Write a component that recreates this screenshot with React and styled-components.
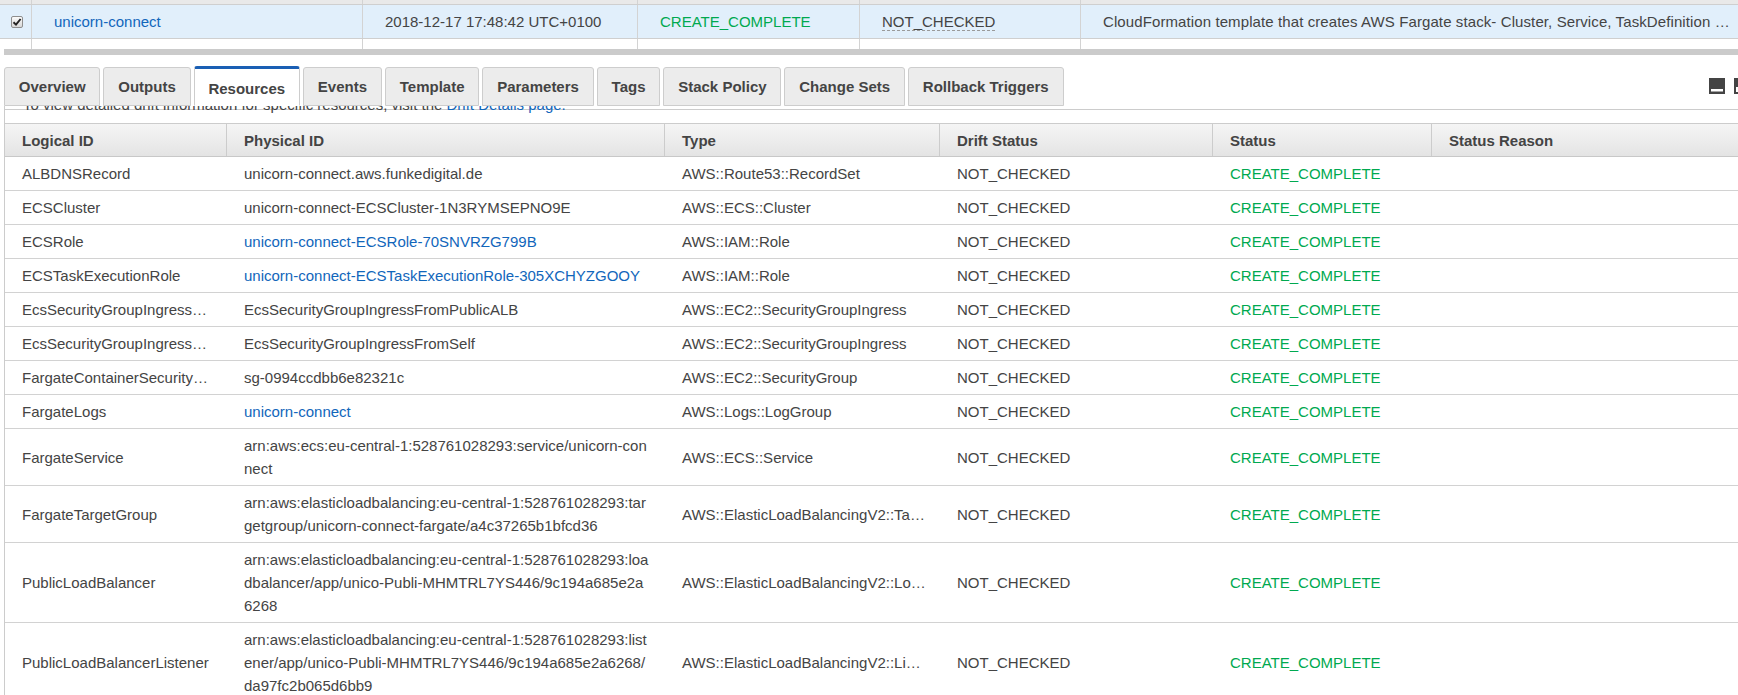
import React from "react";
import styled, { createGlobalStyle, css } from "styled-components";

const GlobalStyle = createGlobalStyle`
  html, body {
    margin: 0;
    padding: 0;
    overflow: hidden;
    background: #fff;
  }
  body {
    font-family: "Liberation Sans", Arial, sans-serif;
    font-size: 15px;
    color: #444;
  }
`;

const Page = styled.div`
  width: 1760px;
`;

/* stack list (top, scrolled) */

const StackList = styled.div`
  height: 49px;
  overflow: hidden;
`;

const StackScroll = styled.div`
  margin-top: -29px;
`;

const StackRow = styled.div`
  display: grid;
  grid-template-columns: 32px 331px 275px 222px 221px 1fr;
  height: 34px;
  box-sizing: border-box;
  border-bottom: 1px solid #cfcfcf;
  background: ${(p) => (p.$head ? "#e9e9e9" : p.$selected ? "#e1effb" : "#fff")};
  ${(p) => p.$head && css`font-weight: bold;`}
`;

const StackCell = styled.div`
  display: flex;
  align-items: center;
  padding: 0 10px 0 22px;
  border-right: 1px solid #d3d3d3;
  white-space: nowrap;
  overflow: hidden;
  ${(p) =>
    p.$center &&
    css`
      justify-content: center;
      padding: 0 0 0 2px;
    `}
  ${(p) =>
    p.$desc &&
    css`
      letter-spacing: 0.1px;
    `}
`;

const CheckBox = styled.span`
  width: 12px;
  height: 12px;
  box-sizing: border-box;
  border: 1px solid #8e8e8e;
  border-radius: 2px;
  background: linear-gradient(#fbfbfb, #d8d8d8);
  display: flex;
  align-items: center;
  justify-content: center;
`;

const Link = styled.span`
  color: #1166bb;
`;

const Status = styled.span`
  color: #00a94f;
`;

const Dotted = styled.span`
  border-bottom: 1px dashed #9a9a9a;
  line-height: 17px;
`;

const Splitter = styled.div`
  height: 6px;
  margin-left: 4px;
  background: #cbcbcb;
`;

/* tabs */

const TabBar = styled.div`
  display: flex;
  align-items: flex-end;
  gap: 3px;
  height: 40px;
  margin-top: 11px;
  padding: 0 10px 0 4px;
`;

const Tab = styled.div`
  height: 39px;
  box-sizing: border-box;
  padding: 0 13.85px;
  display: flex;
  align-items: center;
  border: 1px solid #cdcdcd;
  border-radius: 3px 3px 0 0;
  background: #ececec;
  font-weight: bold;
  color: #444;
  white-space: nowrap;
  ${(p) =>
    p.$active &&
    css`
      height: 40px;
      padding-top: 3px;
      background: #fff;
      border-top: 3px solid #1a5fb4;
      border-bottom-color: #fff;
    `}
`;

const PanelTools = styled.div`
  margin-left: auto;
  align-self: center;
  display: flex;
  gap: 9px;
`;

/* resources panel */

const Panel = styled.div`
  margin-left: 4px;
  border-left: 1px solid #cccccc;
  overflow: hidden;
  height: 600px;
  background: linear-gradient(#cccccc, #cccccc) 0 3px / 100% 1px no-repeat;
`;

const Intro = styled.p`
  margin: -13px 0 7px;
  padding-left: 18px;
  line-height: 23px;
  white-space: nowrap;
`;

const ResRow = styled.div`
  display: grid;
  grid-template-columns: 222px 438px 275px 273px 219px 1fr;
  align-items: center;
  border-bottom: 1px solid #d2d2d2;
  ${(p) =>
    p.$head &&
    css`
      align-items: stretch;
      border-top: 1px solid #cccccc;
      border-bottom-color: #c8c8c8;
      background: linear-gradient(#f5f5f5, #e4e4e4);
      font-weight: bold;
    `}
`;

const ResCell = styled.div`
  padding: 5px 14px 5px 17px;
  line-height: 23px;
  min-width: 0;
  ${(p) =>
    p.$head &&
    css`
      padding: 5px 14px 4px 17px;
      border-right: 1px solid #cccccc;
    `}
  ${(p) =>
    p.$clip &&
    css`
      white-space: nowrap;
      overflow: hidden;
      text-overflow: ellipsis;
    `}
  ${(p) =>
    p.$wrap &&
    css`
      word-break: break-all;
    `}
`;

const tabs = [
  "Overview",
  "Outputs",
  "Resources",
  "Events",
  "Template",
  "Parameters",
  "Tags",
  "Stack Policy",
  "Change Sets",
  "Rollback Triggers",
];

const resources = [
  ["ALBDNSRecord", "unicorn-connect.aws.funkedigital.de", false, "AWS::Route53::RecordSet"],
  ["ECSCluster", "unicorn-connect-ECSCluster-1N3RYMSEPNO9E", false, "AWS::ECS::Cluster"],
  ["ECSRole", "unicorn-connect-ECSRole-70SNVRZG799B", true, "AWS::IAM::Role"],
  ["ECSTaskExecutionRole", "unicorn-connect-ECSTaskExecutionRole-305XCHYZGOOY", true, "AWS::IAM::Role"],
  ["EcsSecurityGroupIngressFromPublicALB", "EcsSecurityGroupIngressFromPublicALB", false, "AWS::EC2::SecurityGroupIngress"],
  ["EcsSecurityGroupIngressFromSelf", "EcsSecurityGroupIngressFromSelf", false, "AWS::EC2::SecurityGroupIngress"],
  ["FargateContainerSecurityGroup", "sg-0994ccdbb6e82321c", false, "AWS::EC2::SecurityGroup"],
  ["FargateLogs", "unicorn-connect", true, "AWS::Logs::LogGroup"],
  ["FargateService", "arn:aws:ecs:eu-central-1:528761028293:service/unicorn-connect", false, "AWS::ECS::Service"],
  [
    "FargateTargetGroup",
    "arn:aws:elasticloadbalancing:eu-central-1:528761028293:targetgroup/unicorn-connect-fargate/a4c37265b1bfcd36",
    false,
    "AWS::ElasticLoadBalancingV2::TargetGroup",
  ],
  [
    "PublicLoadBalancer",
    "arn:aws:elasticloadbalancing:eu-central-1:528761028293:loadbalancer/app/unico-Publi-MHMTRL7YS446/9c194a685e2a6268",
    false,
    "AWS::ElasticLoadBalancingV2::LoadBalancer",
  ],
  [
    "PublicLoadBalancerListener",
    "arn:aws:elasticloadbalancing:eu-central-1:528761028293:listener/app/unico-Publi-MHMTRL7YS446/9c194a685e2a6268/da97fc2b065d6bb9",
    false,
    "AWS::ElasticLoadBalancingV2::Listener",
  ],
];

function MinimizeIcon() {
  return (
    <svg width="16" height="16" viewBox="0 0 16 16">
      <rect width="16" height="16" fill="#444" />
      <rect x="2" y="11" width="12" height="2.5" fill="#fff" />
    </svg>
  );
}

function SplitIcon() {
  return (
    <svg width="16" height="16" viewBox="0 0 16 16">
      <rect width="16" height="16" fill="#444" />
      <rect x="2" y="9" width="12" height="5" fill="#fff" />
    </svg>
  );
}

export default function App() {
  return (
    <Page>
      <GlobalStyle />

      <StackList>
        <StackScroll>
          <StackRow $head>
            <StackCell $center />
            <StackCell>Stack Name</StackCell>
            <StackCell>Created Time</StackCell>
            <StackCell>Status</StackCell>
            <StackCell>Drift Status</StackCell>
            <StackCell>Description</StackCell>
          </StackRow>
          <StackRow $selected>
            <StackCell $center>
              <CheckBox>
                <svg width="10" height="10" viewBox="0 0 10 10">
                  <path d="M1.5 5.2 L4 7.6 L8.6 2" fill="none" stroke="#222" strokeWidth="1.9" />
                </svg>
              </CheckBox>
            </StackCell>
            <StackCell>
              <Link>unicorn-connect</Link>
            </StackCell>
            <StackCell>2018-12-17 17:48:42 UTC+0100</StackCell>
            <StackCell>
              <Status>CREATE_COMPLETE</Status>
            </StackCell>
            <StackCell>
              <Dotted>NOT_CHECKED</Dotted>
            </StackCell>
            <StackCell $desc>
              CloudFormation template that creates AWS Fargate stack- Cluster, Service, TaskDefinition …
            </StackCell>
          </StackRow>
          <StackRow>
            <StackCell $center />
            <StackCell />
            <StackCell />
            <StackCell />
            <StackCell />
            <StackCell />
          </StackRow>
        </StackScroll>
      </StackList>
      <Splitter />

      <TabBar>
        {tabs.map((t) => (
          <Tab key={t} $active={t === "Resources"}>
            {t}
          </Tab>
        ))}
        <PanelTools>
          <MinimizeIcon />
          <SplitIcon />
        </PanelTools>
      </TabBar>

      <Panel>
        <Intro>
          To view detailed drift information for specific resources, visit the <Link>Drift Details page.</Link>
        </Intro>
        <ResRow $head>
          <ResCell $head>Logical ID</ResCell>
          <ResCell $head>Physical ID</ResCell>
          <ResCell $head>Type</ResCell>
          <ResCell $head>Drift Status</ResCell>
          <ResCell $head>Status</ResCell>
          <ResCell $head>Status Reason</ResCell>
        </ResRow>
        {resources.map(([logical, physical, isLink, type]) => (
          <ResRow key={logical}>
            <ResCell $clip>{logical}</ResCell>
            <ResCell $wrap>{isLink ? <Link>{physical}</Link> : physical}</ResCell>
            <ResCell $clip>{type}</ResCell>
            <ResCell>NOT_CHECKED</ResCell>
            <ResCell>
              <Status>CREATE_COMPLETE</Status>
            </ResCell>
            <ResCell />
          </ResRow>
        ))}
      </Panel>
    </Page>
  );
}
